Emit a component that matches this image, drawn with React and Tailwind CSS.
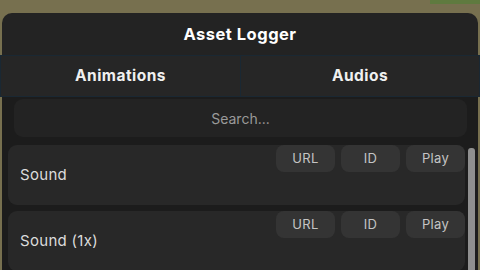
export default function App() {
  const rows = ["Sound", "Sound (1x)"]

  return (
    <div className="relative w-[480px] h-[270px] overflow-hidden bg-[#77704f] font-['Inter',sans-serif]">
      <div className="absolute right-0 top-0 h-[4px] w-[50px] bg-[#5f7a3f]" />
      <div className="relative mt-[13px] ml-[2px] w-[476px] h-[257px] rounded-t-[10px] bg-[#232323] flex flex-col">
        <div className="shrink-0 h-[42px] flex items-center justify-center text-white font-bold text-[16.5px] tracking-[0.03em]">
          Asset Logger
        </div>
        <div className="shrink-0 -mx-[2px] h-[42px] flex border-y border-[#1a2833]">
          <div className="w-[241px] flex items-center justify-center bg-[#262626] border-x border-[#1a2833] text-[#f0f0f0] font-bold text-[15.5px] tracking-[0.03em]">
            Animations
          </div>
          <div className="flex-1 flex items-center justify-center bg-[#262626] border-r border-[#1a2833] text-[#f0f0f0] font-bold text-[15.5px] tracking-[0.03em]">
            Audios
          </div>
        </div>
        <div className="flex-1 min-h-0 overflow-hidden bg-[#1c1c1c] pt-[2px] flex flex-col">
          <div className="shrink-0 ml-[12px] w-[453px] h-[38px] rounded-[9px] bg-[#232323] flex items-center justify-center text-[#9a9a9a] text-[14px]">
            Search...
          </div>
          <div className="shrink-0 flex mt-[8px]">
            <div className="ml-[6px] w-[457px] flex flex-col gap-[6px]">
              {rows.map((name) => (
                <div key={name} className="relative shrink-0 h-[60px] rounded-[9px] bg-[#282828] flex items-center pl-[12px] text-[#dcdcdc] text-[15px] tracking-[0.02em]">
                  {name}
                  <div className="absolute right-0 top-0 flex gap-[6px]">
                    {["URL", "ID", "Play"].map((b) => (
                      <div key={b} className="w-[59px] h-[27px] rounded-[8px] bg-[#343434] flex items-center justify-center text-[#c4c4c4] text-[13px]">
                        {b}
                      </div>
                    ))}
                  </div>
                </div>
              ))}
            </div>
            <div className="ml-[3px] mt-[3px] w-[7px] h-[200px] rounded-t-[3px] bg-[#8f8f8f]" />
          </div>
        </div>
      </div>
    </div>
  )
}
